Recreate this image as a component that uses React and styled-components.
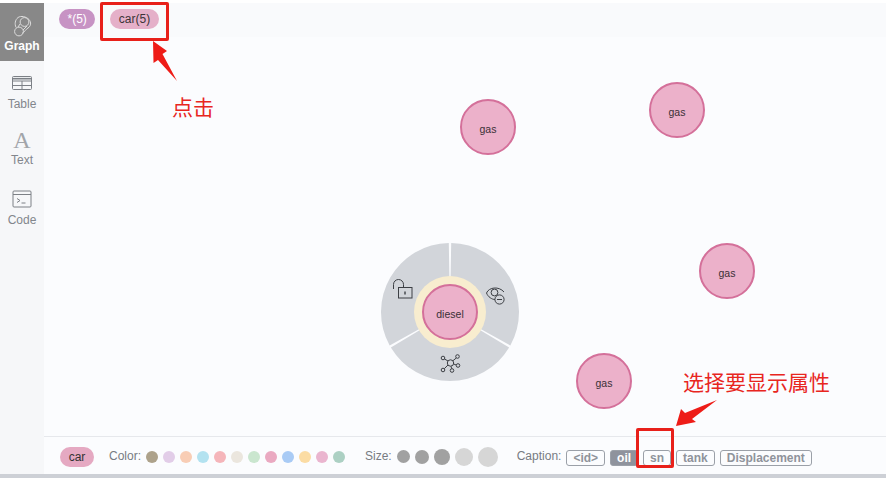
import React from 'react';
import styled, { createGlobalStyle } from 'styled-components';

const GlobalStyle = createGlobalStyle`
  html, body { margin: 0; padding: 0; background: #fff; }
  body { font-family: "Liberation Sans", Arial, sans-serif; }
`;

const Page = styled.div`
  position: relative;
  width: 886px;
  height: 478px;
  overflow: hidden;
  display: flex;
  flex-direction: column;
  padding-top: 3px;
  box-sizing: border-box;
  background: #fff;
`;

const Main = styled.div`
  flex: 1;
  display: flex;
  min-height: 0;
`;

const Sidebar = styled.nav`
  width: 44px;
  flex: none;
  background: #f6f7f9;
  display: flex;
  flex-direction: column;
`;

const NavItem = styled.div`
  height: ${(p) => p.$h}px;
  box-sizing: border-box;
  padding-top: ${(p) => p.$pad}px;
  display: flex;
  flex-direction: column;
  align-items: center;
  background: ${(p) => (p.$active ? '#888888' : 'transparent')};
  color: ${(p) => (p.$active ? '#fff' : '#82868c')};
  font-size: 12px;
  font-weight: ${(p) => (p.$active ? 700 : 400)};
  line-height: 14px;
`;

const NavIcon = styled.div`
  height: 23px;
  display: flex;
  align-items: center;
  justify-content: center;
  margin-bottom: ${(p) => p.$mb || 0}px;
`;

const SerifA = styled.span`
  font-family: "Liberation Serif", serif;
  font-size: 24px;
  line-height: 20px;
  color: #a2a5aa;
`;

const Content = styled.div`
  flex: 1;
  min-width: 0;
  display: flex;
  flex-direction: column;
  background: #fbfcfe;
`;

const TabBar = styled.div`
  height: 34px;
  flex: none;
  display: flex;
  align-items: flex-start;
  gap: 15px;
  padding: 6px 0 0 15px;
  box-sizing: border-box;
  background: #f9fafc;
`;

const Pill = styled.span`
  height: 20px;
  padding: 0 8.5px;
  border-radius: 10px;
  display: inline-flex;
  align-items: center;
  font-size: 12px;
  background: ${(p) => p.$bg};
  color: ${(p) => p.$fg};
`;

const Canvas = styled.div`
  flex: 1;
  position: relative;
  min-height: 0;
`;

const Node = styled.div`
  position: absolute;
  left: ${(p) => p.$x - 28}px;
  top: ${(p) => p.$y - 28}px;
  width: 56px;
  height: 56px;
  box-sizing: border-box;
  padding-top: 3px;
  border-radius: 50%;
  border: 2px solid #d4709a;
  background: #ecb1ca;
  color: #3a3036;
  font-size: 10.5px;
  display: flex;
  align-items: center;
  justify-content: center;
`;

const Radial = styled.svg`
  position: absolute;
  left: ${(p) => p.$x - 70}px;
  top: ${(p) => p.$y - 70}px;
`;

const Footer = styled.footer`
  height: 38px;
  flex: none;
  box-sizing: border-box;
  border-top: 1px solid #e6e8ec;
  padding: 2px 0 0 16px;
  background: #fbfcfe;
  display: flex;
  align-items: center;
  font-size: 12px;
  color: #777b82;
`;

const CarChip = styled.span`
  width: 34px;
  height: 20px;
  border-radius: 10px;
  background: #e5a9c2;
  color: #333;
  display: flex;
  align-items: center;
  justify-content: center;
  margin-right: 15px;
`;

const Label = styled.span`
  margin-right: ${(p) => p.$mr}px;
  position: relative;
  top: -1px;
`;

const Row = styled.div`
  display: flex;
  align-items: center;
  gap: ${(p) => p.$gap}px;
  margin-right: ${(p) => p.$mr}px;
`;

const Dot = styled.span`
  width: ${(p) => p.$size}px;
  height: ${(p) => p.$size}px;
  border-radius: 50%;
  background: ${(p) => p.$bg};
  flex: none;
`;

const TagRow = styled(Row)`
  margin-top: 2px;
`;

const Tag = styled.span`
  height: 16px;
  box-sizing: border-box;
  padding: 0 6px;
  border-radius: 3px;
  border: 1px solid #9ba0a8;
  background: ${(p) => (p.$active ? '#8f939d' : 'transparent')};
  color: ${(p) => (p.$active ? '#fff' : '#8f939b')};
  font-weight: 700;
  font-size: 12px;
  display: inline-flex;
  align-items: center;
`;

const BottomStrip = styled.div`
  height: 4px;
  flex: none;
  background: #cdd0d6;
`;

const RedBox = styled.div`
  position: absolute;
  left: ${(p) => p.$x}px;
  top: ${(p) => p.$y}px;
  width: ${(p) => p.$w}px;
  height: ${(p) => p.$h}px;
  box-sizing: border-box;
  border: 3px solid #e8201a;
  border-radius: 2px;
`;

const RedNote = styled.div`
  position: absolute;
  left: ${(p) => p.$x}px;
  top: ${(p) => p.$y}px;
  font-family: "Noto Sans CJK SC", sans-serif;
  font-size: ${(p) => p.$size}px;
  line-height: 1;
  color: #e8261e;
  white-space: nowrap;
`;

const Arrow = styled.svg`
  position: absolute;
  left: ${(p) => p.$x}px;
  top: ${(p) => p.$y}px;
`;

const GraphIcon = () => (
  <svg width="22" height="22" viewBox="0 0 22 22" fill="none" stroke="#dcdcdc" strokeWidth="1">
    <path d="M7 2.5 C10 0.5 15 1.5 18 4.5 C20.5 7.5 20 11 17 13 C14.5 14.5 13.5 17 11 18.5" />
    <circle cx="13.5" cy="7" r="4.4" />
    <circle cx="8" cy="16.5" r="4.4" />
    <path d="M7 2.5 C4 5 3.5 9 5 12.4 M9 9 L7 12 M16 11 L12 15" />
  </svg>
);

const TableIcon = () => (
  <svg width="22" height="16" viewBox="0 0 22 16" fill="none" stroke="#7c8086" strokeWidth="1">
    <rect x="1.5" y="1.5" width="19" height="13" rx="1" />
    <path d="M1.5 6h19M1.5 10.5h19M11 6v8.5" />
    <path d="M1.5 3.7h19" strokeWidth="1.6" />
  </svg>
);

const CodeIcon = () => (
  <svg width="20" height="18" viewBox="0 0 20 18" fill="none" stroke="#7c8086" strokeWidth="1">
    <rect x="1" y="1" width="18" height="16" rx="1" />
    <path d="M1 4.5h18M5 8.5l3 2-3 2M9.5 13h4" />
  </svg>
);

// sector of the radial menu between two angles, degrees clockwise from the top
const sector = (a0, a1, r0, r1) => {
  const pt = (a, r) => {
    const t = ((a - 90) * Math.PI) / 180;
    return `${(70 + r * Math.cos(t)).toFixed(2)} ${(70 + r * Math.sin(t)).toFixed(2)}`;
  };
  return `M${pt(a0, r1)} A${r1} ${r1} 0 0 1 ${pt(a1, r1)} L${pt(a1, r0)} A${r0} ${r0} 0 0 0 ${pt(a0, r0)} Z`;
};

const RadialMenu = ({ x, y }) => (
  <Radial $x={x} $y={y} width="140" height="140" viewBox="0 0 140 140">
    <path d={sector(1, 119, 34, 69)} fill="#d2d5da" />
    <path d={sector(121, 239, 34, 69)} fill="#d2d5da" />
    <path d={sector(241, 359, 34, 69)} fill="#d2d5da" />
    <circle cx="70" cy="70" r="36" fill="#f8edcf" />
    {/* unlock */}
    <g fill="none" stroke="#3c3f44" strokeWidth="1">
      <path d="M13.5 47 v-4.5 a5 5 0 0 1 10 0 v2.5" />
      <rect x="18.5" y="45.5" width="13.5" height="10.5" fill="#d2d5da" />
      <path d="M25 49.5 v3" strokeWidth="1.4" />
    </g>
    {/* eye with minus */}
    <g fill="none" stroke="#3c3f44" strokeWidth="1">
      <path d="M106.5 51 C109 45 119 44 124 50 M106.5 51 C108 55 112 57.5 115 57.5" />
      <circle cx="114.5" cy="50.5" r="3.4" />
      <circle cx="119.5" cy="57.5" r="4.6" fill="#d2d5da" />
      <path d="M117 57.5h5" />
    </g>
    {/* graph expand */}
    <g fill="none" stroke="#3c3f44" strokeWidth="1">
      <circle cx="70.5" cy="121" r="3.2" />
      <circle cx="63" cy="116" r="1.8" />
      <circle cx="77.5" cy="114.5" r="1.8" />
      <circle cx="63" cy="128" r="1.8" />
      <circle cx="72" cy="128.5" r="1.8" />
      <circle cx="78" cy="123.5" r="1.8" />
      <path d="M64.5 117 L68 119 M76.3 116 L72.8 118.8 M64.3 126.7 L68 123 M71 124.2 L71.7 126.7 M73.7 122 L76.2 123" />
    </g>
  </Radial>
);

const colors = ['#ada28b', '#e2cde8', '#f8cdb5', '#b3e2f0', '#f5b5ba', '#ebe6de', '#cae6cf', '#eaa9c1', '#a9cbf5', '#fbdca4', '#eab5cf', '#acd0c3'];
const sizes = [
  { s: 13, bg: '#a1a1a1' },
  { s: 14, bg: '#a1a1a1' },
  { s: 16, bg: '#a1a1a1' },
  { s: 18, bg: '#d6d6d6' },
  { s: 20, bg: '#d6d6d6' },
];
const gasNodes = [
  { x: 444, y: 90 },
  { x: 633, y: 73 },
  { x: 683, y: 234 },
  { x: 560, y: 344 },
];

export default function App() {
  return (
    <>
      <GlobalStyle />
      <Page>
        <Main>
          <Sidebar>
            <NavItem $active $h={58} $pad={11}>
              <NavIcon $mb={2}><GraphIcon /></NavIcon>
              Graph
            </NavItem>
            <NavItem $h={56} $pad={10}>
              <NavIcon $mb={3}><TableIcon /></NavIcon>
              Table
            </NavItem>
            <NavItem $h={60} $pad={11}>
              <NavIcon $mb={2}><SerifA>A</SerifA></NavIcon>
              Text
            </NavItem>
            <NavItem $h={56} $pad={10}>
              <NavIcon $mb={3}><CodeIcon /></NavIcon>
              Code
            </NavItem>
          </Sidebar>
          <Content>
            <TabBar>
              <Pill $bg="#c793c4" $fg="#fff">*(5)</Pill>
              <Pill $bg="#e5b0c9" $fg="#3c3438">car(5)</Pill>
            </TabBar>
            <Canvas>
              {gasNodes.map((n) => (
                <Node key={n.x} $x={n.x} $y={n.y}>gas</Node>
              ))}
              <RadialMenu x={406} y={275} />
              <Node $x={406} $y={275}>diesel</Node>
            </Canvas>
            <Footer>
              <CarChip>car</CarChip>
              <Label $mr={5}>Color:</Label>
              <Row $gap={5} $mr={20}>
                {colors.map((c) => <Dot key={c} $size={12} $bg={c} />)}
              </Row>
              <Label $mr={5}>Size:</Label>
              <Row $gap={5} $mr={19}>
                {sizes.map((d) => <Dot key={d.s} $size={d.s} $bg={d.bg} />)}
              </Row>
              <Label $mr={5}>Caption:</Label>
              <TagRow $gap={5} $mr={0}>
                <Tag>&lt;id&gt;</Tag>
                <Tag $active>oil</Tag>
                <Tag>sn</Tag>
                <Tag>tank</Tag>
                <Tag>Displacement</Tag>
              </TagRow>
            </Footer>
          </Content>
        </Main>
        <BottomStrip />

        <RedBox $x={100} $y={2} $w={69} $h={39} />
        <Arrow $x={150} $y={40} width="30" height="42" viewBox="0 0 30 42">
          <path d="M3 1 L17 11 L12.5 14 L27 41 L8 20 L3.5 23 Z" fill="#ee1c17" />
        </Arrow>
        <RedNote $x={172} $y={96} $size={21}>点击</RedNote>

        <RedBox $x={636} $y={428} $w={38} $h={40} />
        <Arrow $x={674} $y={398} width="46" height="30" viewBox="0 0 46 30">
          <path d="M2 28 L7 11 L11 15 L43 2 L18 21 L22 24 Z" fill="#ee1c17" />
        </Arrow>
        <RedNote $x={683} $y={371} $size={21}>选择要显示属性</RedNote>
      </Page>
    </>
  );
}
